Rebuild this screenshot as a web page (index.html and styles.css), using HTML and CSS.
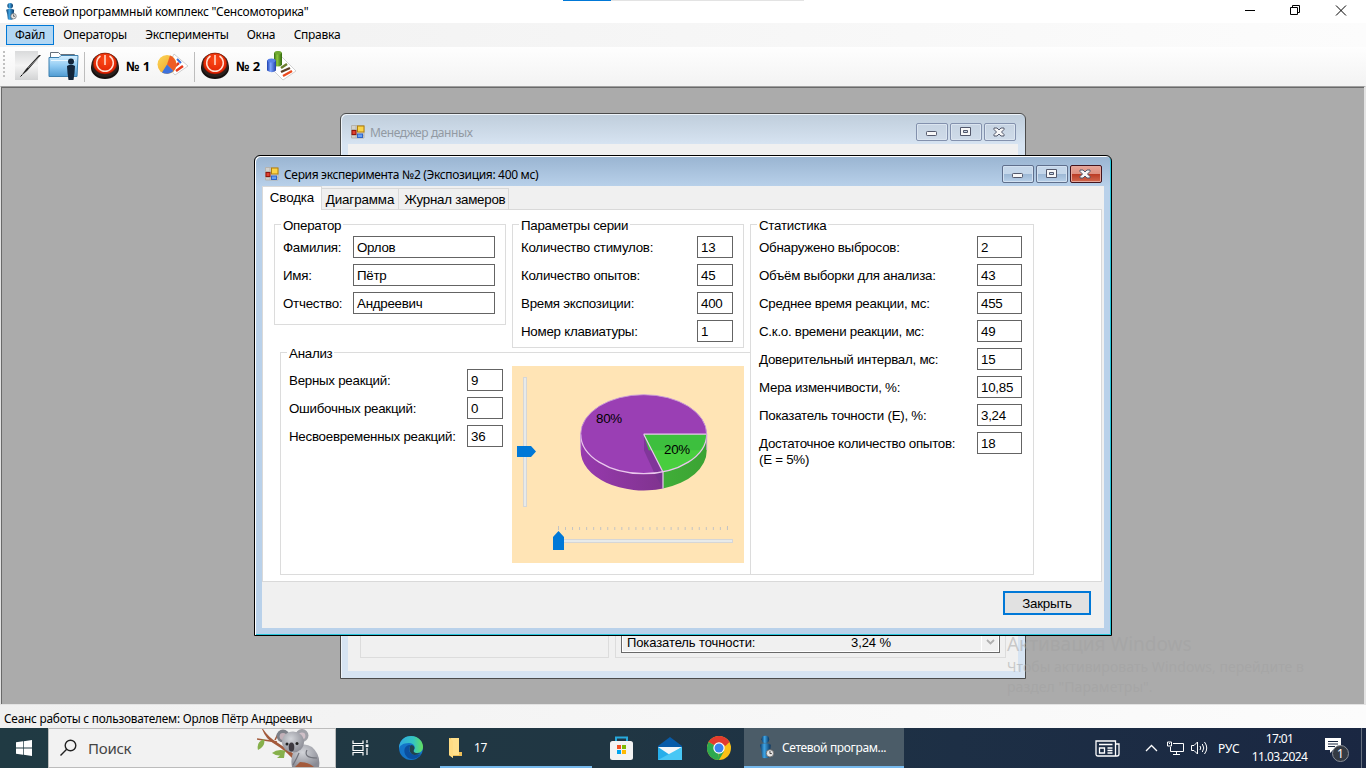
FILE: index.html
```html
<!DOCTYPE html>
<html lang="ru">
<head>
<meta charset="utf-8">
<title>Сетевой программный комплекс "Сенсомоторика"</title>
<link rel="stylesheet" href="styles.css">
</head>
<body>
<svg class="defs" width="0" height="0">
  <defs>
    <linearGradient id="man" x1="0" x2="1"><stop offset="0" stop-color="#0a3966"/><stop offset=".4" stop-color="#3fa4e4"/><stop offset="1" stop-color="#08335e"/></linearGradient>
    <linearGradient id="paper" x1="0" y1="0" x2="0" y2="1"><stop offset="0" stop-color="#d9dadb"/><stop offset=".5" stop-color="#f4f4f4"/><stop offset="1" stop-color="#d2d3d4"/></linearGradient>
    <linearGradient id="fold" x1="0" y1="0" x2="0" y2="1"><stop offset="0" stop-color="#d6efff"/><stop offset=".5" stop-color="#8fcaf2"/><stop offset="1" stop-color="#4f9bd2"/></linearGradient>
    <radialGradient id="red" cx=".5" cy=".35" r=".7"><stop offset="0" stop-color="#ff4a18"/><stop offset="1" stop-color="#d81c00"/></radialGradient>
    <linearGradient id="orange" x1="0" y1="0" x2="1" y2="1"><stop offset="0" stop-color="#fbd75a"/><stop offset="1" stop-color="#f09a1c"/></linearGradient>
    <linearGradient id="green" x1="0" x2="1"><stop offset="0" stop-color="#356f12"/><stop offset=".4" stop-color="#8cc63c"/><stop offset="1" stop-color="#31680e"/></linearGradient>
    <linearGradient id="blue" x1="0" x2="1"><stop offset="0" stop-color="#1c3fae"/><stop offset=".4" stop-color="#7fa5ff"/><stop offset="1" stop-color="#1f3fa8"/></linearGradient>
    <linearGradient id="purpleSide" x1="0" x2="1"><stop offset="0" stop-color="#973aae"/><stop offset="1" stop-color="#80338f"/></linearGradient>
    <linearGradient id="greenSide" x1="0" x2="1"><stop offset="0" stop-color="#40ae38"/><stop offset="1" stop-color="#3ba333"/></linearGradient>
    <radialGradient id="fur" cx=".4" cy=".35" r=".7"><stop offset="0" stop-color="#d2d4d9"/><stop offset="1" stop-color="#8a8b94"/></radialGradient>
    <linearGradient id="edgeTop" x1="0" x2="1"><stop offset="0" stop-color="#2faae2"/><stop offset=".6" stop-color="#35c5c0"/><stop offset="1" stop-color="#64e05c"/></linearGradient>
  </defs>
  <symbol id="app" viewBox="0 0 13 20">
    <circle cx="5.500" cy="3.300" r="3.300" fill="url(#man)"/><path d="M.8 8Q5.500 5.500 10.200 8L9.700 13 8.800 19Q5.500 20.500 2.800 19L2 13z" fill="url(#man)"/>
    <circle cx="9.500" cy="15.500" r="3.200" fill="#e4e4e4" stroke="#6e6e6e" stroke-width=".8"/><path d="M9.500 13.500v2.200h1.600" fill="none" stroke="#333" stroke-width=".8"/>
  </symbol>
  <symbol id="form" viewBox="0 0 14 14">
    <path d="M.5.5h12.500v12.500H.5zM5 .5v12.500M.5 4.500h12.500M.5 10.500h12.500" fill="#d3d1cc" stroke="#b5b3ae"/>
    <rect x="6.500" y="1" width="6.500" height="6" fill="#fbd449" stroke="#b07f0b"/><rect x="1" y="5.500" width="4" height="4" fill="#e0402e" stroke="#8e140c"/><rect x="6.500" y="9" width="5" height="3.500" fill="#66a0f3" stroke="#2f63c5"/>
  </symbol>
  <symbol id="power" viewBox="0 0 28 27">
    <ellipse cx="14" cy="16" rx="14" ry="11" fill="#15100e"/><ellipse cx="14" cy="13" rx="13.500" ry="12" fill="#2c211e"/>
    <ellipse cx="14" cy="11.500" rx="11.800" ry="10.500" fill="url(#red)" stroke="#7a1500" stroke-width=".6"/>
    <path d="M9.500 4A8.300 8.300 0 1 0 18.500 4M14 3v10" fill="none" stroke="#ffe0d2" stroke-width="1.500"/>
  </symbol>
  <symbol id="wclose" viewBox="0 0 30 16">
    <path d="M10 4h3l2 2 2-2h3v1.500L17.500 8l2.500 2.500V12h-3l-2-2-2 2h-3v-1.500L12.500 8 10 5.500z" fill="#f8f8f8" stroke="#53586b"/>
  </symbol>
</svg>

<header class="titlebar">
  <svg class="app-icon" width="12" height="17"><use href="#app"/></svg>
  <span class="app-title">Сетевой программный комплекс "Сенсомоторика"</span>
  <svg class="caption-controls" width="138" height="22" viewBox="0 0 138 22" fill="none" stroke="#000"><path d="M17 10.500h10M62.500 7.500h7v7h-7zM64.500 7V5.500h7v7H70M108 5.500l10 10M118 5.500l-10 10"/></svg>
  <div class="snap-bar"><i></i></div>
</header>

<nav class="menu">
  <span class="mi m1 active">Файл</span><span class="mi m2">Операторы</span><span class="mi m3">Эксперименты</span><span class="mi m4">Окна</span><span class="mi m5">Справка</span>
</nav>

<div class="toolbar">
  <i class="grip"></i>
  <svg class="t-note" width="28" height="30" viewBox="0 0 28 30"><rect x="1" y="0" width="23" height="29" fill="url(#paper)"/><path d="M27 4L25 4 12 18 7 25l6-5z" fill="#252525"/><path d="M8 24l-1.500 1.500" stroke="#000"/><path d="M25 6L14 17" stroke="#888" stroke-width=".8"/></svg>
  <svg class="t-folder" width="31" height="30" viewBox="0 0 31 30"><path d="M2.500 7V1.500h8l2 2h14V8" fill="#fff" stroke="#67707a"/><path d="M1 6.500h10l2-2h17l-1 21H1z" fill="url(#fold)" stroke="#3c7fae"/><path d="M3 9.500h24" stroke="#e9f7ff"/><circle cx="23" cy="10.500" r="3" fill="#12253a"/><path d="M19 15q4-2.500 8 0l-.5 7-1 7h-5L19.500 22z" fill="#12253a"/></svg>
  <i class="sep"></i>
  <svg class="t-power" width="28" height="27"><use href="#power"/></svg>
  <b class="num">№ 1</b>
  <svg class="t-chart" width="32" height="26" viewBox="0 0 32 26"><path d="M17 1l14 12-13 9-7-8z" fill="#fff" stroke="#bbb" stroke-width=".7"/><path d="M17 14l5-4M19 18l7-5" stroke="#e7391b" stroke-width="2.600"/><path d="M20 6l4 4" stroke="#3770db" stroke-width="2"/><circle cx="10" cy="11.500" r="9.500" fill="url(#orange)"/><path d="M10 11.500L13 2.500a9.500 9.500 0 0 1 3.500 15.500z" fill="#ee5d25"/><path d="M10 11.500l6.500 6.500A9.500 9.500 0 0 1 5 19.500z" fill="#3f72dc"/></svg>
  <i class="sep"></i>
  <svg class="t-power" width="28" height="27"><use href="#power"/></svg>
  <b class="num">№ 2</b>
  <svg class="t-bars" width="31" height="31" viewBox="0 0 31 31"><path d="M14 6l15 15-13 9-9-9z" fill="#fff" stroke="#c0c0c0" stroke-width=".7"/><path d="M14 18l6-4" stroke="#6b7d2f" stroke-width="2.400"/><path d="M14 22l9-4" stroke="#5d3f27" stroke-width="2.400"/><path d="M16 26l9-5" stroke="#ed4b1f" stroke-width="2.400"/><path d="M7 3q4-4 8 0v12q-4 3-8 0z" fill="url(#green)"/><ellipse cx="11" cy="2.800" rx="3.600" ry="1.800" fill="#6fa832"/><path d="M0 10.500q4-3 9 0v10q-4 3.500-9 0z" fill="url(#blue)"/><ellipse cx="4.500" cy="10.500" rx="4" ry="2" fill="#577fe6"/></svg>
</div>

<main class="mdi">
  <section class="win back">
    <div class="wtitle">
      <svg width="14" height="14"><use href="#form"/></svg><span class="wname wname-back">Менеджер данных</span>
      <div class="wbtns">
        <i class="wb"><svg width="30" height="16" viewBox="0 0 30 16"><rect x="9.500" y="7.500" width="10" height="4" rx=".8" fill="#f8f8f8" stroke="#53586b"/></svg></i>
        <i class="wb"><svg width="30" height="16" viewBox="0 0 30 16"><path fill-rule="evenodd" d="M9.500 3.500h10v8h-10zM12.500 6.500v2h4v-2z" fill="#f8f8f8" stroke="#53586b"/></svg></i>
        <i class="wb"><svg class="x" width="30" height="16"><use href="#wclose"/></svg></i>
      </div>
    </div>
    <div class="wclient back-client">
      <div class="back-box box-a"></div>
      <div class="back-box box-b"><div class="combo"><span class="combo-name">Показатель точности:</span><span class="combo-val">3,24 %</span><i class="combo-arrow"><svg width="9" height="6" viewBox="0 0 9 6"><path d="M1 1l3.500 3.500L8 1" fill="none" stroke="#b0b0b0" stroke-width="1.800"/></svg></i></div></div>
    </div>
  </section>

  <section class="win front">
    <div class="wtitle">
      <svg width="14" height="14"><use href="#form"/></svg><span class="wname wname-front">Серия эксперимента №2 (Экспозиция: 400 мс)</span>
      <div class="wbtns">
        <i class="wb"><svg width="30" height="16" viewBox="0 0 30 16"><rect x="9.500" y="7.500" width="10" height="4" rx=".8" fill="#f8f8f8" stroke="#53586b"/></svg></i>
        <i class="wb"><svg width="30" height="16" viewBox="0 0 30 16"><path fill-rule="evenodd" d="M9.500 3.500h10v8h-10zM12.500 6.500v2h4v-2z" fill="#f8f8f8" stroke="#53586b"/></svg></i>
        <i class="wb close"><svg class="x" width="30" height="16"><use href="#wclose"/></svg></i>
      </div>
    </div>
    <div class="wclient front-client">
      <div class="tabs"><span class="tab tab1">Сводка</span><span class="tab tab2">Диаграмма</span><span class="tab tab3">Журнал замеров</span></div>
      <div class="page">
        <div class="left">
          <div class="top">
            <div class="group g-oper"><h3>Оператор</h3>
              <div class="row"><span>Фамилия:</span><b>Орлов</b></div>
              <div class="row"><span>Имя:</span><b>Пётр</b></div>
              <div class="row"><span>Отчество:</span><b>Андреевич</b></div>
            </div>
            <div class="group g-par"><h3>Параметры серии</h3>
              <div class="row"><span>Количество стимулов:</span><b>13</b></div>
              <div class="row"><span>Количество опытов:</span><b>45</b></div>
              <div class="row"><span>Время экспозиции:</span><b>400</b></div>
              <div class="row"><span>Номер клавиатуры:</span><b>1</b></div>
            </div>
          </div>
          <div class="group g-an">
            <div class="an-left"><h3>Анализ</h3>
              <div class="row"><span>Верных реакций:</span><b>9</b></div>
              <div class="row"><span>Ошибочных реакций:</span><b>0</b></div>
              <div class="row"><span>Несвоевременных реакций:</span><b>36</b></div>
            </div>
            <svg class="pie" width="232" height="197" viewBox="0 0 232 197">
              <rect width="232" height="197" fill="#ffe4b5"/>
              <g fill="#e7eaea" stroke="#d6d6d6"><rect x="11.500" y="11.500" width="3" height="129"/><rect x="41.500" y="173.500" width="179" height="3"/></g>
              <path d="M46.500 160v4M215.500 160v4" stroke="#c4c4c4"/>
              <path d="M53 162.500h163" stroke="#c4c4c4" stroke-width="3" stroke-dasharray="1 6.040"/>
              <path d="M5 80h14l5 5.500-5 5.500H5zM41 184v-13l5.500-6 5.500 6v13z" fill="#0078d7"/>
              <path d="M68.700 68.200v16.300A63 39.500 0 0 0 151 122.500V106z" fill="url(#purpleSide)"/>
              <path d="M151 106v16.500a63 39.500 0 0 0 43.700-38V68.200z" fill="url(#greenSide)"/>
              <ellipse cx="131.700" cy="68.200" rx="63" ry="39.500" fill="#9a3fb4"/>
              <path d="M132 68.500v16l11 24 8 14V106z" fill="#75338e" opacity=".7"/>
              <path d="M131.700 68.200h63a63 39.500 0 0 1-43.700 37.800z" fill="#48ce3e"/>
              <path d="M131.700 68.200h63a50 36 0 0 1-7 16h-51z" fill="#3dbf3e"/>
              <path d="M68.700 68.200a63 39.500 0 0 0 126 0M131.700 68.200h63M131.700 68.200l19.300 38v16.500" fill="none" stroke="#eac8ed" stroke-width="1.200"/>
              <path d="M68.700 84V68.200a63 39.500 0 0 1 126 0V84" fill="none" stroke="#c89bd8" stroke-width=".9"/>
              <text x="84" y="57" class="pct">80%</text><text x="152" y="88" class="pct">20%</text>
            </svg>
          </div>
        </div>
        <div class="group g-stat"><h3>Статистика</h3>
          <div class="row"><span>Обнаружено выбросов:</span><b>2</b></div>
          <div class="row"><span>Объём выборки для анализа:</span><b>43</b></div>
          <div class="row"><span>Среднее время реакции, мс:</span><b>455</b></div>
          <div class="row"><span>С.к.о. времени реакции, мс:</span><b>49</b></div>
          <div class="row"><span>Доверительный интервал, мс:</span><b>15</b></div>
          <div class="row"><span>Мера изменчивости, %:</span><b>10,85</b></div>
          <div class="row"><span>Показатель точности (E), %:</span><b>3,24</b></div>
          <div class="row two"><span>Достаточное количество опытов:<br>(E = 5%)</span><b>18</b></div>
        </div>
      </div>
      <div class="footer"><button class="btn">Закрыть</button></div>
    </div>
  </section>
  <div class="watermark"><div class="wm1">Активация Windows</div><div class="wm2">Чтобы активировать Windows, перейдите в<br>раздел "Параметры".</div></div>
</main>

<div class="status">Сеанс работы с пользователем: Орлов Пётр Андреевич</div>

<footer class="taskbar">
  <div class="start"><svg width="16" height="16" viewBox="0 0 16 16" fill="#fff"><path d="M0 2.300l7-1v6.300H0zM7.700 1.200L16 0v7.600H7.700zM0 8.400h7v6.300l-7-1zM7.700 8.400H16V16l-8.300-1.200z"/></svg></div>
  <div class="search">
    <svg class="lens" width="18" height="18" viewBox="0 0 18 18" fill="none" stroke="#222" stroke-width="1.400"><circle cx="10.500" cy="6.500" r="5.300"/><path d="M6.700 10.300L.5 16.500"/></svg>
    <span class="find">Поиск</span>
    <svg class="koala" width="66" height="38" viewBox="0 0 66 38">
      <path d="M6 0q6 9 15 14 13 8 24 18l12 6H42Q33 24 16 14 9 10 5 0z" fill="#a35a3b"/>
      <path d="M0 10l20 3" stroke="#a35a3b" stroke-width="1.500"/>
      <path d="M18 11L21 5" stroke="#a35a3b" stroke-width="1.500"/><path d="M7 10q-8 3-6 11 8-4 6-11zM15 24q6-5 14-2-5 8-14 2zM20 29q6-5 8-7l-1 7z" fill="#86b04b"/>
      <path d="M38 20q8-8 17-2 9 8 7 20H35q-2-10 3-18z" fill="url(#fur)"/>
      <circle cx="26" cy="7" r="6.500" fill="#7d8088"/><circle cx="45" cy="6.500" r="6.500" fill="#a0a1a8"/><circle cx="26" cy="7.500" r="3.400" fill="#c3b0b8"/><circle cx="45" cy="7" r="3.400" fill="#d0c0c8"/>
      <ellipse cx="36" cy="13" rx="11" ry="10.500" fill="url(#fur)"/><ellipse cx="34.500" cy="18" rx="2.800" ry="4.500" fill="#3d3940"/><circle cx="30" cy="15" r="1.500" fill="#222"/><circle cx="40" cy="14.500" r="1.500" fill="#222"/>
      <path d="M42 24q-2 5-6 12M50 21q-4 8 10 8" fill="none" stroke="#70727a" stroke-width="1.200"/><path d="M43 33q8 0 14 5H38z" fill="#a35a3b"/>
    </svg>
  </div>
  <div class="tb tview"><svg width="17" height="16" viewBox="0 0 17 16" fill="none" stroke="#fff" stroke-width="1.200"><path d="M1 .5v3h10v-3M1 15.500v-3h10v3M1 5.500h10v5H1zM15 0v3M15 8v7"/><rect x="14.300" y="5" width="1.500" height="1.500"/></svg></div>
  <div class="tb edge"><svg width="24" height="24" viewBox="0 0 24 24"><circle cx="12" cy="12" r="12" fill="#1474c8"/><path d="M0 11C1 3 7 0 12 0c8 0 12 6 12 11 0 5-4 6-7 6s-3-2-2-3c2-3 0-7-5-7-6 0-10 3-10 6z" fill="url(#edgeTop)"/><path d="M10 9c-6 1-6 9-1 13 4 2 10 1 13-4-5 2-12 1-12-5 0-2 1-3 2-4z" fill="#0b4f9f"/><path d="M12 9q3 0 3.500 3-.5 2-1 3 1 3 7 2-2 2-6 2-5-1-5-6 0-3 1.500-4z" fill="#22414c"/></svg></div>
  <div class="folder-btn"><svg width="15" height="21" viewBox="0 0 15 21"><path d="M1 1h10v14h3v4H5v2l-4-3z" fill="#eebf58"/><path d="M3 1h8v17H4z" fill="#ffe08c"/><path d="M1 1l4 3v17l-4-3z" fill="#ffdc83"/></svg><span>17</span></div>
  <div class="tb store"><svg width="23" height="24" viewBox="0 0 23 24"><path d="M6 6V1.500h11V6" fill="none" stroke="#27a9dc" stroke-width="2"/><rect y="5" width="23" height="19" rx="2.500" fill="#f3f3f3"/><path fill="#f25022" d="M7 9h4v4H7z"/><path fill="#7fba00" d="M12 9h4v4h-4z"/><path fill="#00a4ef" d="M7 14h4v4H7z"/><path fill="#ffb900" d="M12 14h4v4h-4z"/></svg></div>
  <div class="tb mail"><svg width="24" height="23" viewBox="0 0 24 23"><path d="M0 9l12-9 12 9v14H0z" fill="#075ba9"/><path d="M0 10h24v8H0z" fill="#f3f6f9"/><path d="M0 10l12 8 12-8v13H0z" fill="#26aeea"/><path d="M0 23l24-13v13z" fill="#48c7f5"/></svg></div>
  <div class="tb chrome"><svg width="24" height="24" viewBox="0 0 24 24"><circle cx="12" cy="12" r="12" fill="#fbc116"/><path d="M12 12L1.600 6a12 12 0 0 1 20.800 0z" fill="#e33b2e"/><path d="M12 12l-1.300 12A12 12 0 0 1 1.600 6z" fill="#2da94f"/><path d="M12 6h10.400l-4 4z" fill="#e33b2e"/><path d="M17.200 15L12 24h-1.300l1-7z" fill="#2da94f"/><circle cx="12" cy="12" r="5.700" fill="#fff"/><circle cx="12" cy="12" r="4.500" fill="#3a83ef"/></svg></div>
  <div class="app-btn"><svg width="15" height="24" viewBox="0 0 13 20"><use href="#app"/></svg><span>Сетевой програм...</span></div>
  <div class="tray">
    <svg class="news" width="25" height="17" viewBox="0 0 25 17" fill="none" stroke="#fff" stroke-width="1.300"><path d="M1 1h19.500v15H3q-2 0-2-2zM20.500 4H24v10q0 2-2 2h-2M4 4.500h13.500M12.500 8h5M12.500 10.500h5M12.500 13h5"/><path d="M4.500 8h5v5h-5z"/></svg>
    <svg class="chev" width="13" height="8" viewBox="0 0 13 8"><path d="M1 7l5.500-5.500L12 7" fill="none" stroke="#fff" stroke-width="1.300"/></svg>
    <svg class="net" width="17" height="15" viewBox="0 0 17 15" fill="none" stroke="#fff"><path d="M6 2.500h10.500v8H3.500V6M9.500 10.500v3M6 13.500h7M.5 1h4v4h-4z"/><path d="M2 2.500h1"/></svg>
    <svg class="vol" width="17" height="14" viewBox="0 0 17 14" fill="none" stroke="#fff"><path d="M.5 4.500H3L6.500 1v12L3 9.500H.5zM9 5q1.500 2 0 4M11.300 3q3 4 0 8M13.500 1q4.500 6 0 12"/></svg>
    <span class="lang">РУС</span>
    <div class="clock"><span>17:01</span><span class="date">11.03.2024</span></div>
    <svg class="notif" width="25" height="25" viewBox="0 0 25 25"><path d="M0 0h16v12H8l-3 3v-3H0z" fill="#fff"/><path d="M3 3.500h10M3 6h10M3 8.500h7" stroke="#1a2943"/><circle cx="15.500" cy="15.500" r="8" fill="#343a43" stroke="#8a8f97"/><text x="15.500" y="20" text-anchor="middle" class="badge">1</text></svg>
    <i class="peek"></i>
  </div>
</footer>
</body>
</html>
```
FILE: styles.css
```css
* { box-sizing: border-box; }
body { margin: 0; width: 1366px; height: 768px; overflow: hidden; display: flex; flex-direction: column; background: #fff; color: #000; font: 12px "Noto Sans", sans-serif; white-space: nowrap; }
svg { display: block; flex: none; }
i, b, h3 { font-style: normal; font-weight: normal; margin: 0; }
.defs { position: absolute; }

.titlebar { height: 23px; display: flex; align-items: flex-start; padding-left: 5px; position: relative; }
.app-icon { margin-top: 3px; }
.app-title { margin-left: 6px; line-height: 24px; letter-spacing: -.25px; }
.caption-controls { margin-left: auto; }
.snap-bar { position: absolute; left: 563px; top: 0; width: 241px; height: 1px; background: #e3e3e3; }
.snap-bar i { display: block; width: 48px; height: 1px; background: #0078d7; }

.menu { height: 24px; background: linear-gradient(90deg, #f0f0f0, #fcfcfc); display: flex; align-items: flex-start; padding: 2px 0 0 6px; letter-spacing: -.25px; }
.mi { height: 20px; line-height: 20px; text-align: center; }
.mi.active { background: #b3d7f3; border: 1px solid #0078d7; line-height: 18px; }
.m1 { width: 48px; } .m2 { width: 82px; } .m3 { width: 102px; } .m4 { width: 46px; } .m5 { width: 66px; }

.toolbar { height: 39px; display: flex; align-items: flex-start; padding: 4px 0 0 3px; background: linear-gradient(#fefefe, #f3f3f3); }
.grip { width: 2px; height: 27px; background: repeating-linear-gradient(#c0c0c0 0 2px, transparent 2px 4px); }
.t-note { margin-left: 9px; }
.t-folder { margin-left: 6px; }
.sep { width: 1px; height: 30px; background: #bdbdbd; margin: 1px 6px 0 5px; }
.t-power { margin-top: 1px; }
.num { font-weight: bold; font-size: 13px; line-height: 31px; width: 25px; margin: 0 6px 0 7px; }
.t-chart { margin: 2px 0 0 0; }
.t-bars { margin-top: -1px; }

.mdi { position: relative; height: 619px; background: #ababab; border: 1px solid #e3e3e3; border-right-width: 2px; border-top: 1px solid #a0a0a0; box-shadow: inset 1px 1px #696969; }
.win { position: absolute; display: flex; flex-direction: column; padding: 1px 7px 7px; border: 1px solid #333; border-radius: 6px 6px 0 0; }
.back { left: 339px; top: 26px; width: 686px; height: 566px; background: linear-gradient(#bfcddb, #d7e4f2 31px); border-color: #4b4b4b; box-shadow: inset 1px 1px #eef4fa; }
.front { left: 253px; top: 68px; width: 858px; height: 481px; background: linear-gradient(#99b4d1, #b9d1ea 31px); border-color: #000; box-shadow: inset 1px 1px #fff, inset -1px -1px #27c5da; }
.wtitle { height: 29px; display: flex; align-items: flex-start; padding: 10px 2px 0 3px; }
.wname { margin-left: 5px; line-height: 18px; margin-top: -1px; font-size: 12px; letter-spacing: -.33px; }
.wname-back { color: #929aa3; letter-spacing: -.4px; }
.wbtns { margin-left: auto; display: flex; gap: 2px; margin-top: -2px; }
.wb { width: 32px; height: 18px; border: 1px solid #8391ad; border-radius: 2px; background: linear-gradient(#c6d3e2, #cfdbe9); box-shadow: inset 0 0 0 1px #dbe5f0; }
.wb .x { margin-left: -1px; }
.front .wb { border-color: #5f6f8c; background: linear-gradient(#c5d7ea 50%, #9cb7d4 50%, #b8d0e9); box-shadow: inset 0 0 0 1px #d2e1f1; }
.front .close { border-color: #43141d; background: linear-gradient(#e7a598, #dd8f80 50%, #ba3a24 50%, #d1694f); box-shadow: inset 0 0 0 1px #e5a79b; }
.wclient { flex: 1; background: #f0f0f0; }

.back-client { display: flex; align-items: flex-end; padding: 0 12px 13px; gap: 6px; font: 13px "Liberation Sans", sans-serif; letter-spacing: -.1px; }
.back-box { height: 80px; border: 1px solid #dcdcdc; }
.box-a { width: 249px; }
.box-b { width: 391px; padding: 0 5px 4px; display: flex; align-items: flex-end; }
.combo { width: 379px; height: 22px; border: 1px solid #696969; display: flex; align-items: center; padding-left: 5px; box-shadow: inset 0 0 0 1px #fff; }
.combo-name { width: 224px; }
.combo-val { flex: 1; }
.combo-arrow { width: 18px; height: 18px; display: flex; align-items: center; justify-content: center; border-left: 1px solid #fff; }

.front-client { display: flex; flex-direction: column; font: 13.33px "Liberation Sans", sans-serif; letter-spacing: -.26px; }
.tabs { height: 23px; display: flex; align-items: flex-end; letter-spacing: -.1px; }
.tab { height: 21px; line-height: 22px; text-align: center; border: 1px solid #d9d9d9; border-left: 0; border-bottom: 0; }
.tab1 { width: 60px; height: 24px; margin-bottom: -1px; line-height: 22px; background: #fff; border-left: 1px solid #d9d9d9; position: relative; z-index: 1; }
.tab2 { width: 77px; } .tab3 { width: 110px; padding-left: 3px; letter-spacing: -.25px; }
.page { width: 840px; height: 373px; background: #fff; border: 1px solid #d9d9d9; display: flex; padding: 14px 0 0 11px; }
.left { width: 476px; }
.top { display: flex; gap: 6px; }
.group { border: 1px solid #dcdcdc; padding: 0 10px 0 6px; }
h3 { font-size: 13.33px; width: max-content; height: 16px; line-height: 15px; margin: -7px 0 2px; padding: 0 2px; background: #fff; }
.row { display: flex; justify-content: space-between; height: 22px; margin-bottom: 6px; line-height: 23px; padding-left: 2px; }
.row b { width: 36px; border: 1px solid #646464; background: #fff; padding-left: 3px; line-height: 21px; }
.g-oper { width: 232px; height: 101px; }
.g-oper .row b { width: 142px; }
.g-par { width: 232px; height: 124px; }
.g-an { width: 471px; height: 223px; margin: 4px 0 0 6px; display: flex; }
.an-left { width: 216px; flex: none; }
.g-an h3 { margin-bottom: 7px; }
.pie { margin: 13px 0 0 9px; }
.pct { font-size: 13.33px; }
.g-stat { width: 284px; height: 351px; padding-right: 11px; }
.g-stat .row b { width: 45px; }
.two b { height: 22px; }
.two span { line-height: 16px; padding-top: 4px; }
.footer { flex: 1; display: flex; justify-content: flex-end; align-items: flex-start; padding: 9px 13px 0 0; }
.btn { width: 88px; height: 24px; padding: 0; border: 2px solid #0078d7; background: #e1e1e1; color: #000; font: 13.33px "Liberation Sans", sans-serif; letter-spacing: -.25px; }

.watermark { position: absolute; left: 1006px; top: 544px; color: rgba(161, 161, 161, .5); }
.wm1 { font-size: 19px; line-height: 26px; }
.wm2 { font-size: 14px; line-height: 20px; letter-spacing: .05px; }

.status { height: 23px; background: linear-gradient(90deg, #f0f0f0, #fcfcfc); line-height: 26px; padding-left: 4px; font-size: 11.8px; letter-spacing: -.2px; }

.taskbar { height: 40px; display: flex; color: #fff; background: linear-gradient(90deg, #203a43, #203643 45%, #1d2f45 70%, #1a2742); }
.start, .tb { display: flex; align-items: center; justify-content: center; }
.start { width: 48px; }
.search { width: 288px; background: #f2f2f2; border: 1px solid #bcbcbc; display: flex; align-items: center; padding-left: 11px; color: #444; }
.find { font-size: 15px; margin-left: 10px; letter-spacing: -.25px; }
.koala { margin: 0 12px 0 auto; }
.tview { width: 48px; } .edge { width: 54px; margin-right: 2px; }
.folder-btn { width: 152px; border-bottom: 2px solid #76b9ed; display: flex; align-items: center; padding-left: 8px; gap: 11px; letter-spacing: -.3px; }
.store { width: 58px; } .mail { width: 40px; } .chrome { width: 58px; }
.app-btn { width: 160px; margin-left: -4px; background: #4b5c68; border-bottom: 2px solid #76b9ed; display: flex; align-items: center; padding-left: 15px; gap: 8px; letter-spacing: -.35px; }
.tray { flex: 1; display: flex; align-items: center; padding-left: 191px; }
.chev { margin-left: 25px; } .net { margin-left: 9px; } .vol { margin-left: 7px; }
.lang { margin-left: 10px; width: 34px; }
.clock { display: flex; flex-direction: column; align-items: center; width: 55px; line-height: 18px; letter-spacing: -.6px; }
.notif { margin: 5px 0 0 18px; }
.badge { fill: #fff; font-size: 12px; }
.peek { width: 1px; align-self: stretch; background: #66707f; margin-left: 11px; }
```
